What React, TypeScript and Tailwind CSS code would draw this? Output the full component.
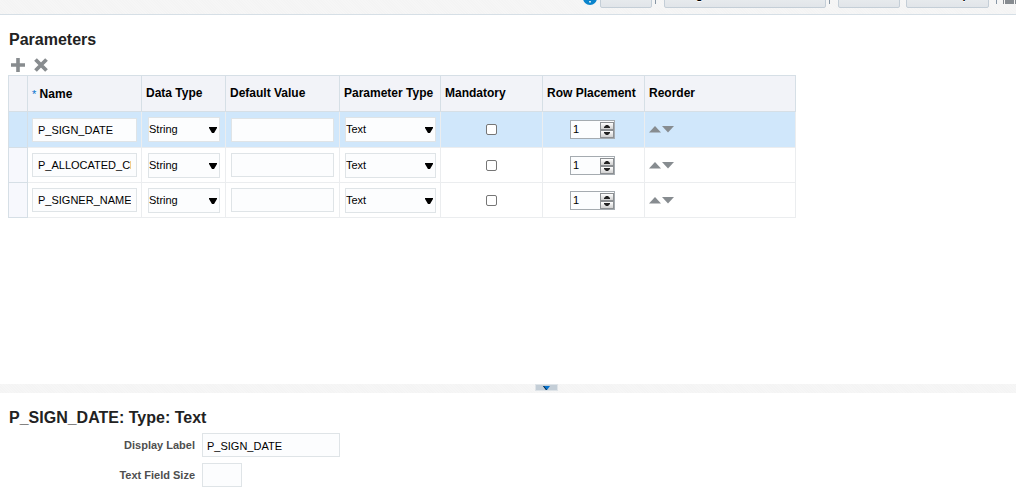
import { useState } from "react";

type Param = { id: number; name: string };

const initial: Param[] = [
  { id: 1, name: "P_SIGN_DATE" },
  { id: 2, name: "P_ALLOCATED_CHARGE" },
  { id: 3, name: "P_SIGNER_NAME" },
];

const HATCH =
  "bg-[repeating-linear-gradient(45deg,#f4f4f4_0px,#f4f4f4_1px,#f6f6f6_1px,#f6f6f6_2px)]";

const FIELD = "border border-[#dfe4e7] bg-[#fcfdfe] text-[11px] text-black outline-none";

function ToolButton({ label, width }: { label: string; width: string }) {
  return (
    <button
      type="button"
      className={`${width} h-6 shrink-0 whitespace-nowrap rounded-[2px] border border-[#c4ced7] bg-linear-to-b from-[#f2f4f6] to-[#e1e5e9] pb-[3px] text-center text-[11px] leading-4 font-bold text-black [text-shadow:0_1px_0_#fff]`}
    >
      {label}
    </button>
  );
}

function Divider({ space }: { space: string }) {
  return <span className={`${space} h-1 w-px shrink-0 self-start bg-[#8796a5]`} />;
}

function Picker({ label, options, width }: { label: string; options: string[]; width: string }) {
  return (
    <div className={`${width} grid`}>
      <select
        aria-label={label}
        className={`${FIELD} col-start-1 row-start-1 h-[25px] w-full appearance-none text-[#333]`}
      >
        {options.map((o) => (
          <option key={o}>{o}</option>
        ))}
      </select>
      <svg
        viewBox="0 0 8 6"
        className="pointer-events-none col-start-1 row-start-1 mt-px mr-[3px] h-[6px] w-2 self-center justify-self-end"
      >
        <path d="M0 0h8v1L5 6H3L0 1z" fill="#000" />
      </svg>
    </div>
  );
}

function Spinner({ label }: { label: string }) {
  const [value, setValue] = useState("1");
  const step = (n: number) => setValue(String(Number(value) + n));
  return (
    <div className="mx-auto flex h-[19px] w-[45px] border border-[#a5abb0] bg-[#fcfdfe]">
      <input
        aria-label={label}
        value={value}
        onChange={(e) => setValue(e.target.value)}
        className="w-[29px] min-w-0 bg-transparent pl-[2px] text-[11px] text-black outline-none"
      />
      <div className="flex w-[14px] flex-col pt-px">
        <button
          type="button"
          aria-label="Increment"
          onClick={() => step(1)}
          className="flex h-2 items-center justify-center border border-[#8c8f92] bg-linear-to-b from-white to-[#d0d0d0]"
        >
          <svg viewBox="0 0 8 4" className="h-1 w-2">
            <path d="M1 4v-1L3 1h2l2 2v1z" fill="#222" />
          </svg>
        </button>
        <button
          type="button"
          aria-label="Decrement"
          onClick={() => step(-1)}
          className="flex h-2 items-center justify-center border border-[#8c8f92] bg-linear-to-b from-white to-[#d0d0d0]"
        >
          <svg viewBox="0 0 8 4" className="h-1 w-2">
            <path d="M1 0v1l2 2h2l2-2V0z" fill="#222" />
          </svg>
        </button>
      </div>
    </div>
  );
}

const HEADS = ["Data Type", "Default Value", "Parameter Type", "Mandatory", "Row Placement", "Reorder"];

export default function App() {
  const [rows, setRows] = useState(initial);
  const [selected, setSelected] = useState(1);

  const rename = (id: number, name: string) =>
    setRows(rows.map((r) => (r.id === id ? { ...r, name } : r)));
  const move = (i: number, by: number) => {
    const j = i + by;
    if (j < 0 || j >= rows.length) return;
    const next = [...rows];
    [next[i], next[j]] = [next[j], next[i]];
    setRows(next);
  };
  const current = rows.find((r) => r.id === selected) ?? rows[0];

  return (
    <div className="min-h-screen overflow-hidden bg-white font-['Liberation_Sans',Arial,sans-serif] text-black">
      <header
        className={`${HATCH} flex h-[15px] items-end justify-end overflow-hidden border-b border-[#d6dfe6] pb-[6px]`}
      >
        <svg viewBox="0 0 14 14" className="mr-[3px] mb-[3px] h-[14px] w-[14px] shrink-0">
          <circle cx="7" cy="7" r="7" fill="#0a84cc" />
          <path d="M7 10v1.600M5 5a2 2 0 1 1 2 2.200v1.500" stroke="#fff" strokeWidth="1.600" fill="none" />
        </svg>
        <ToolButton label="Validate" width="w-[52px]" />
        <Divider space="ml-[3px] mr-2" />
        <ToolButton label="Manage Private Data Sources" width="w-[162px]" />
        <Divider space="ml-[3px] mr-2" />
        <ToolButton label="View Data" width="w-[62px]" />
        <span className="w-[6px] shrink-0" />
        <ToolButton label="Create Report" width="w-[83px]" />
        <Divider space="ml-[7px] mr-[6px]" />
        <svg viewBox="0 0 13 14" className="mb-[4px] h-[14px] w-[13px] shrink-0">
          <path d="M0 2h1v12H0zM2 0h9v14H2zM12 2h1v12h-1z" fill="#868b90" />
        </svg>
      </header>

      <main>
        <section className="flex h-[369px] flex-col items-start px-2">
          <h1 className="mt-[15px] pl-px text-[16px] leading-5 font-bold text-[#222]">Parameters</h1>
          <div className="flex h-[25px] items-center gap-[7px] pt-[5px] pl-[2px]">
            <button type="button" aria-label="Add parameter">
              <svg viewBox="0 0 16 16" className="block h-4 w-4">
                <path d="M8 1v14M1 8h14" stroke="#888c8f" strokeWidth="3.600" fill="none" />
              </svg>
            </button>
            <button type="button" aria-label="Delete parameter">
              <svg viewBox="0 0 16 16" className="block h-4 w-4">
                <path d="M2.500 2.500l11 11M13.500 2.500l-11 11" stroke="#888c8f" strokeWidth="3.800" fill="none" />
              </svg>
            </button>
          </div>
          <table className="w-[787px] table-fixed border-collapse">
            <colgroup>
              <col className="w-[19px]" />
              <col className="w-[114px]" />
              <col className="w-[84px]" />
              <col className="w-[114px]" />
              <col className="w-[101px]" />
              <col className="w-[102px]" />
              <col className="w-[102px]" />
              <col className="w-[151px]" />
            </colgroup>
            <thead>
              <tr className="h-9 bg-[#f2f3f8] text-left text-[12px] leading-4">
                <th className="border border-[#d6dfe6]" />
                <th className="border border-[#d6dfe6] pl-1">
                  <span className="text-[11px] font-normal text-[#0572ce]">*</span> Name
                </th>
                {HEADS.map((h) => (
                  <th key={h} className="whitespace-nowrap border border-[#d6dfe6] pb-[2px] pl-1">
                    {h}
                  </th>
                ))}
              </tr>
            </thead>
            <tbody>
              {rows.map((r, i) => (
                <tr
                  key={r.id}
                  onClick={() => setSelected(r.id)}
                  className={r.id === selected ? "h-9 bg-[#d0e7fb]" : "h-[35px] bg-white"}
                >
                  <td
                    className={`border border-[#d6dfe6] ${r.id === selected ? "" : "bg-[#f7f8fd]"}`}
                  />
                  <td className="border border-[#ebedef] pl-1">
                    <input
                      aria-label="Name"
                      value={r.name}
                      onChange={(e) => rename(r.id, e.target.value)}
                      className={`${FIELD} block h-6 w-[105px] px-[5px]`}
                    />
                  </td>
                  <td className="border border-[#ebedef] pl-[6px]">
                    <Picker label="Data type" options={["String", "Integer", "Date"]} width="w-[72px]" />
                  </td>
                  <td className="border border-[#ebedef] pl-[5px]">
                    <input aria-label="Default value" className={`${FIELD} block h-6 w-[103px] px-[5px]`} />
                  </td>
                  <td className="border border-[#ebedef] pl-[5px]">
                    <Picker label="Parameter type" options={["Text", "Menu", "Date"]} width="w-[91px]" />
                  </td>
                  <td className="border border-[#ebedef]">
                    <input
                      type="checkbox"
                      aria-label="Mandatory"
                      className="mx-auto block h-[11px] w-[11px] appearance-none rounded-[2px] border border-[#767676] bg-white checked:bg-[#0572ce]"
                    />
                  </td>
                  <td className="border border-[#ebedef] pr-[2px]">
                    <Spinner label="Row placement" />
                  </td>
                  <td className="border border-[#ebedef]">
                    <div className="flex gap-px pl-1">
                      <button type="button" aria-label="Move up" onClick={() => move(i, -1)}>
                        <svg viewBox="0 0 12 7" className="h-[7px] w-3">
                          <path d="M0 6.500L6 0l6 6.500z" fill="#878c90" />
                        </svg>
                      </button>
                      <button type="button" aria-label="Move down" onClick={() => move(i, 1)}>
                        <svg viewBox="0 0 12 7" className="h-[7px] w-3">
                          <path d="M0 0h12L6 6.500z" fill="#878c90" />
                        </svg>
                      </button>
                    </div>
                  </td>
                </tr>
              ))}
            </tbody>
          </table>
        </section>

        <div className={`${HATCH} flex h-[9px] justify-center pl-[76px]`}>
          <button
            type="button"
            aria-label="Collapse pane"
            className="flex h-[7px] w-[23px] items-center justify-center border border-[#dfe4e8] bg-[#c4ced7]"
          >
            <svg viewBox="0 0 7 4" className="h-1 w-[7px]">
              <path d="M0 0h7L4 4H3z" fill="#0572ce" />
              <path d="M0 0l3 4h1L1 0z" fill="#123" />
            </svg>
          </button>
        </div>

        <section className="px-2 pt-[15px]">
          <h2 className="pl-px text-[16px] leading-5 font-bold text-[#222]">{current.name}: Type: Text</h2>
          <div className="mt-[5px] flex flex-col gap-[6px] text-[11px] font-bold text-[#4f4f4f]">
            <div className="flex items-center gap-[7px]">
              <label htmlFor="display-label" className="w-[187px] text-right">
                Display Label
              </label>
              <input
                id="display-label"
                value={current.name}
                onChange={(e) => rename(current.id, e.target.value)}
                className={`${FIELD} h-6 w-[138px] px-1 pt-px font-normal`}
              />
            </div>
            <div className="flex items-center gap-[7px]">
              <label htmlFor="field-size" className="w-[187px] text-right">
                Text Field Size
              </label>
              <input id="field-size" className={`${FIELD} h-6 w-10 px-1 font-normal`} />
            </div>
          </div>
        </section>
      </main>
    </div>
  );
}
